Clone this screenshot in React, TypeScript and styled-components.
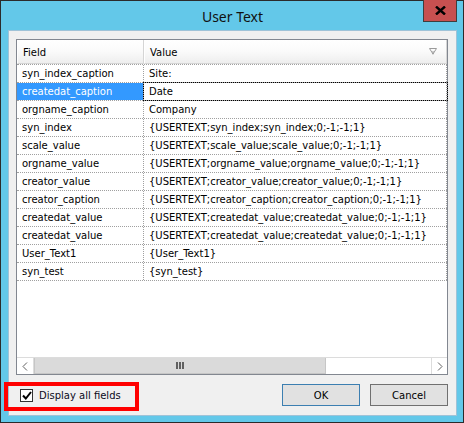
import React from 'react';
import styled, { createGlobalStyle } from 'styled-components';

const GlobalStyle = createGlobalStyle`
  html, body {
    margin: 0;
    padding: 0;
    background: #ffffff;
  }
  * {
    box-sizing: border-box;
  }
`;

const rows: [string, string][] = [
  ['syn_index_caption', 'Site:'],
  ['createdat_caption', 'Date'],
  ['orgname_caption', 'Company'],
  ['syn_index', '{USERTEXT;syn_index;syn_index;0;-1;-1;1}'],
  ['scale_value', '{USERTEXT;scale_value;scale_value;0;-1;-1;1}'],
  ['orgname_value', '{USERTEXT;orgname_value;orgname_value;0;-1;-1;1}'],
  ['creator_value', '{USERTEXT;creator_value;creator_value;0;-1;-1;1}'],
  ['creator_caption', '{USERTEXT;creator_caption;creator_caption;0;-1;-1;1}'],
  ['createdat_value', '{USERTEXT;createdat_value;createdat_value;0;-1;-1;1}'],
  ['createdat_value', '{USERTEXT;createdat_value;createdat_value;0;-1;-1;1}'],
  ['User_Text1', '{User_Text1}'],
  ['syn_test', '{syn_test}'],
];

const SELECTED = 1;

const Window = styled.div`
  position: relative;
  width: 464px;
  height: 423px;
  border: 1px solid #2b2b2b;
  background: #63c8e9;
  padding: 0 6px 6px 7px;
  display: flex;
  flex-direction: column;
`;

const TitleBar = styled.div`
  position: relative;
  height: 29px;
  display: flex;
  align-items: center;
  justify-content: center;
  font-family: 'Noto Sans', 'Open Sans', sans-serif;
  font-size: 14px;
  color: #111;
  padding-top: 1px;
`;

const CloseButton = styled.div`
  position: absolute;
  top: -1px;
  right: 0;
  width: 34px;
  height: 22px;
  background: #c75050;
  border: 1px solid #3e3e3e;
  border-top: none;
  display: flex;
  align-items: center;
  justify-content: center;
`;

const Client = styled.div`
  flex: 1;
  border: 1px solid #9fc3d8;
  background: #f0f0f0;
  padding: 8px 8px 8px 7px;
  display: flex;
  flex-direction: column;
  font-family: 'DejaVu Sans', Verdana, sans-serif;
  font-size: 10px;
  color: #000;
`;

const Grid = styled.div`
  height: 336px;
  border: 1px solid #828790;
  background: #fff;
  display: flex;
  flex-direction: column;
`;

const Header = styled.div`
  height: 24px;
  display: grid;
  grid-template-columns: 127px 1fr;
`;

const HeaderCell = styled.div`
  position: relative;
  display: flex;
  align-items: center;
  padding-left: 5px;
  padding-top: 1px;
  background: linear-gradient(#ffffff 0%, #fafafa 50%, #eeeeee 100%);
  border-right: 1px solid #d5d5d5;
  border-bottom: 1px solid #d5d5d5;
  border-left: 1px solid #ffffff;
`;

const FilterIcon = styled.svg`
  position: absolute;
  right: 9px;
  top: 8px;
`;

const Body = styled.div`
  flex: 1;
  display: flex;
  flex-direction: column;
`;

const Rows = styled.div`
  border-bottom: 1px dotted #a0a0a0;
`;

const Row = styled.div`
  height: 18px;
  display: grid;
  grid-template-columns: 127px 1fr;
  border-top: 1px dotted #a0a0a0;
`;

const Cell = styled.div<{ $selected?: boolean; $focus?: boolean }>`
  display: flex;
  align-items: center;
  padding-left: 5px;
  white-space: nowrap;
  overflow: hidden;
  border-right: 1px dotted #a0a0a0;
  background: ${(p) => (p.$selected ? '#3399ff' : 'transparent')};
  color: ${(p) => (p.$selected ? '#ffffff' : '#000000')};
  outline: ${(p) => (p.$focus ? '1px dotted #000' : 'none')};
`;

const Empty = styled.div`
  flex: 1;
`;

const ScrollBar = styled.div`
  height: 17px;
  display: flex;
  border-top: 1px solid #dcdcdc;
  background: #ffffff;
`;

const ArrowButton = styled.div<{ $side: 'left' | 'right' }>`
  width: ${(p) => (p.$side === 'left' ? '17px' : '16px')};
  display: flex;
  align-items: center;
  justify-content: center;
  background: #ffffff;
  ${(p) => (p.$side === 'left' ? 'border-right: 1px solid #dcdcdc;' : 'border-left: 1px solid #dcdcdc;')}
`;

const Thumb = styled.div`
  width: 292px;
  background: #dadada;
  border: 1px solid #c6c6c6;
  border-top: none;
  display: flex;
  align-items: center;
  justify-content: center;
`;

const Track = styled.div`
  flex: 1;
`;

const Footer = styled.div`
  margin-top: 9px;
  height: 22px;
  display: flex;
  align-items: center;
`;

const CheckLabel = styled.label`
  display: flex;
  align-items: center;
  gap: 6px;
  margin-left: 4px;
  color: #0a0a20;
`;

const CheckBox = styled.div`
  width: 13px;
  height: 13px;
  border: 1px solid #333333;
  background: #ffffff;
  display: flex;
  align-items: center;
  justify-content: center;
`;

const Buttons = styled.div`
  margin-left: auto;
  display: flex;
  gap: 10px;
`;

const Button = styled.div<{ $default?: boolean }>`
  width: 78px;
  height: 22px;
  display: flex;
  align-items: center;
  justify-content: center;
  background: #e1e1e1;
  border: 1px solid ${(p) => (p.$default ? '#3c7fb1' : '#707070')};
`;

const Highlight = styled.div`
  position: absolute;
  left: 3px;
  top: 381px;
  width: 135px;
  height: 29px;
  border: 4px solid #ff0000;
  pointer-events: none;
`;

export default function App() {
  return (
    <>
      <GlobalStyle />
      <Window>
        <TitleBar>
          User Text
          <CloseButton>
            <svg width="11" height="9" viewBox="0 0 11 9">
              <path d="M1 0.5 L10 8.5 M10 0.5 L1 8.5" stroke="#000" strokeWidth="2.4" />
            </svg>
          </CloseButton>
        </TitleBar>
        <Client>
          <Grid>
            <Header>
              <HeaderCell>Field</HeaderCell>
              <HeaderCell>
                Value
                <FilterIcon width="8" height="7" viewBox="0 0 8 7">
                  <path d="M0.5 0.5 H7.5 L4 6 Z" fill="none" stroke="#9a9a9a" strokeWidth="1" />
                  <path d="M4 3 V6.5" stroke="#9a9a9a" strokeWidth="1" />
                </FilterIcon>
              </HeaderCell>
            </Header>
            <Body>
              <Rows>
                {rows.map(([field, value], i) => (
                  <Row key={i}>
                    <Cell $selected={i === SELECTED}>{field}</Cell>
                    <Cell $focus={i === SELECTED}>{value}</Cell>
                  </Row>
                ))}
              </Rows>
              <Empty />
            </Body>
            <ScrollBar>
              <ArrowButton $side="left">
                <svg width="6" height="9" viewBox="0 0 6 9">
                  <path d="M5 0.5 L1 4.5 L5 8.5" fill="none" stroke="#606060" strokeWidth="1" />
                </svg>
              </ArrowButton>
              <Thumb>
                <svg width="8" height="7" viewBox="0 0 8 7">
                  <rect x="0" y="0" width="2" height="7" fill="#606060" />
                  <rect x="3" y="0" width="2" height="7" fill="#606060" />
                  <rect x="6" y="0" width="2" height="7" fill="#606060" />
                </svg>
              </Thumb>
              <Track />
              <ArrowButton $side="right">
                <svg width="6" height="9" viewBox="0 0 6 9">
                  <path d="M1 0.5 L5 4.5 L1 8.5" fill="none" stroke="#606060" strokeWidth="1" />
                </svg>
              </ArrowButton>
            </ScrollBar>
          </Grid>
          <Footer>
            <CheckLabel>
              <CheckBox>
                <svg width="10" height="9" viewBox="0 0 10 9">
                  <path d="M1 4.5 L3.8 7.5 L9 1" fill="none" stroke="#000" strokeWidth="2" />
                </svg>
              </CheckBox>
              Display all fields
            </CheckLabel>
            <Buttons>
              <Button $default>OK</Button>
              <Button>Cancel</Button>
            </Buttons>
          </Footer>
        </Client>
        <Highlight />
      </Window>
    </>
  );
}
